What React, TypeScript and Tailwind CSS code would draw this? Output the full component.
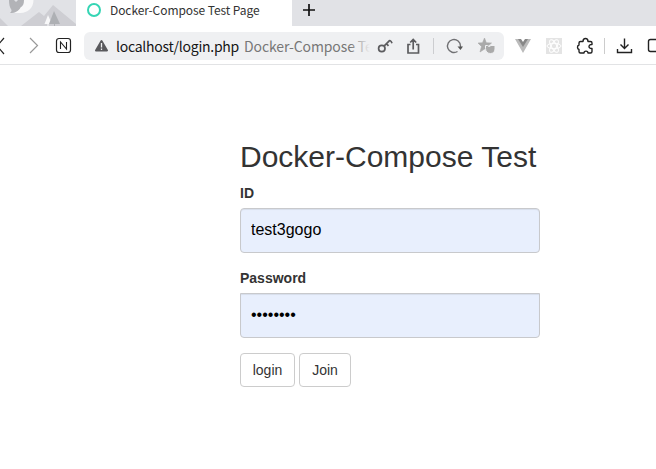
import React from 'react';

const Mountains = () => (
  <svg width="76" height="26" viewBox="0 0 76 26" className="shrink-0">
    <rect width="76" height="26" fill="#e1e2e6" />
    <path d="M0 18 8 26H0Z" fill="#ceced3" />
    <path d="M21 26 39 12l5 4 9-11 23 19v2Z" fill="#ceced3" />
    <path d="M22 0h11.500c0 8-6 13-13 13h-7c5-2 8-6 8.500-13Z" fill="#f8f8f9" />
    <path d="M9 0h5l2 2 2-2h6c0 4-1 6-3.500 7.500C19 11 15 13 10 13c1-1 1.500-1.500 1.500-3C9.500 7 9 4 9 0Z" fill="#b2b3b7" />
    <path d="m48 15 4 9h-7.500Z" fill="#f8f8f9" />
    <path d="m54 11 6 13H49Z" fill="#aeb0b4" />
    <path d="M48 22v4" stroke="#f8f8f9" />
    <path d="M54.500 22v4" stroke="#aeb0b4" />
  </svg>
);

const Toolbar = () => (
  <nav className="flex h-[39px] items-center overflow-hidden border-b border-[#e2e3e5] bg-white pt-px">
    <svg width="76" height="30" viewBox="0 0 76 30" fill="none" className="mr-2 shrink-0">
      <path d="m4 7-7 8 7 8" stroke="#222" strokeWidth="1.2" />
      <path d="m30 7 7.5 7.5L30 22" stroke="#999" strokeWidth="1.2" />
      <rect x="56.5" y="7.5" width="14" height="14" rx="2.5" stroke="#222" strokeWidth="1.2" />
      <path d="M60.5 18v-7l6 7v-7" stroke="#222" strokeWidth="1.1" />
    </svg>
    <div className="flex h-7 w-[420px] shrink-0 items-center rounded-md bg-[#eff0f2]">
      <svg width="32" height="28" viewBox="0 0 32 28" className="shrink-0">
        <path d="M17.5 9 23 18.500H12Z" fill="#59595c" stroke="#59595c" strokeWidth="2" strokeLinejoin="round" />
        <path d="M17.5 11v4.500m0 1v1.500" stroke="#eff0f2" strokeWidth="1.3" />
      </svg>
      <div className="relative flex w-[254px] shrink-0 overflow-hidden whitespace-nowrap text-[14px] leading-[26px]">
        <span className="w-[128px] shrink-0 tracking-[-0.26px] text-[#151515]">localhost/login.php</span>
        <span className="tracking-[-0.1px] text-[#777]">Docker-Compose Te</span>
        <span className="absolute right-0 h-7 w-5 bg-gradient-to-r from-transparent to-[#eff0f2]" />
      </div>
      <svg width="134" height="28" viewBox="370 31 134 28" fill="none" className="shrink-0" stroke="#5c5c5f" strokeWidth="1.7">
        <circle cx="381.800" cy="47.5" r="3.2" />
        <path d="m384 45.200 4.500-4.500c1-1.500 2.500-1.500 3.500 1.500m-5.500.500 2 2.200" />
        <path d="M410.500 43.500h-2.500v8.500h10.500v-8.500H416m-2.800 5v-10m-3 3 3-3 3 3" />
        <path d="M433.5 37v16" stroke="#cccdd0" strokeWidth="1" />
        <path d="M457.500 50.500a6.500 6.500 0 1 1 3-5.500v1.500" stroke="#707073" strokeWidth="1.4" />
        <path d="m457.500 45.500 3 3.500 2.5-3.500Z" fill="#555" stroke="none" />
        <path d="m484.500 37 1.800 4.800 5.200.2-4 3.500 1.500 5-4.500-2.500-4.500 3 1.500-5.500-3.500-3.500 4.500-.2Z" fill="#aaa" stroke="#aaa" strokeWidth=".6" strokeLinejoin="round" />
        <path d="M485.500 44.500h2l1.500 1 2-1h4v3.500c0 3-2 4.500-4.500 4.500s-5-1.500-5-5Z" fill="#aaa" stroke="#eff0f2" strokeWidth="1" />
      </svg>
    </div>
    <svg width="152" height="28" viewBox="504 31 152 28" fill="none" className="shrink-0" stroke="#222" strokeWidth="1.4">
      <path d="M515 38h4l4 7 4-7h4l-8 14Z" fill="#bbb" stroke="none" />
      <path d="M518 38h3l2 3 2-3h3l-5 8Z" fill="#888" stroke="none" />
      <rect x="546" y="37" width="16" height="16" fill="#e4e4e4" stroke="none" />
      <g stroke="#fff" strokeWidth="1">
        <ellipse cx="554" cy="45" rx="7" ry="2.7" />
        <ellipse cx="554" cy="45" rx="7" ry="2.7" transform="rotate(60 554 45)" />
        <ellipse cx="554" cy="45" rx="7" ry="2.7" transform="rotate(120 554 45)" />
      </g>
      <path d="M580.500 40.500h2.500c0-4 5-4 5 0h2.500c1 0 1.500.5 1.500 1.500v1.500c-4-.5-4 4.500 0 4v3c0 1-.5 1.500-1.500 1.500H588c0-2.500-4-2.500-4 0h-3.500c-1 0-1.500-.5-1.500-1.500v-2c-2-.5-2-4 0-4.500v-2c0-1 .5-1.500 1.500-1.500Z" strokeLinejoin="round" />
      <path d="M604.5 37v16" stroke="#ccc" strokeWidth="1" />
      <path d="M624.5 37.5v10m-4-4 4 4 4-4M617.5 48v3.5h14V48" />
      <rect x="648.5" y="38.5" width="12" height="12" rx="2" />
    </svg>
  </nav>
);

export default function App() {
  return (
    <main className="h-[469px] w-[656px] overflow-hidden bg-white font-['Noto_Sans_CJK_KR',sans-serif]">
      <header className="flex h-[26px] bg-[#e1e2e6]">
        <Mountains />
        <div className="flex w-[216px] items-center bg-white pl-[11px]">
          <svg width="14" height="14" viewBox="0 0 14 14" className="mt-[-6px] mr-[9px] shrink-0">
            <circle cx="7" cy="7" r="6" fill="none" stroke="#35d5b4" strokeWidth="2" />
          </svg>
          <span className="mt-[-7px] whitespace-nowrap text-[12px] leading-4 tracking-[-0.08px] text-[#333]">Docker-Compose Test Page</span>
        </div>
        <svg width="34" height="20" viewBox="0 0 34 20"><path d="M11 10h12M17 4v12" stroke="#111" strokeWidth="1.7" /></svg>
      </header>
      <Toolbar />
      <form className="ml-[240px] w-[300px] pt-[75px] font-['Liberation_Sans',Arial,sans-serif] text-[14px] leading-5 text-[#333]" onSubmit={(e) => e.preventDefault()}>
        <h2 className="mb-[10px] whitespace-nowrap text-[30px] font-normal leading-[33px]">Docker-Compose Test</h2>
        <label htmlFor="user" className="mb-[5px] block font-bold">ID</label>
        <input id="user" defaultValue="test3gogo" className="mb-[15px] block h-[45px] w-full rounded border border-[#c8c9cc] bg-[#e8effd] px-[10px] pb-[2px] text-base text-black shadow-[inset_0_1px_1px_rgba(0,0,0,0.075)]" />
        <label htmlFor="password" className="mb-[5px] block font-bold">Password</label>
        <input id="password" type="password" defaultValue="password" className="mb-[15px] block h-[45px] w-full rounded-b border border-[#c8c9cc] bg-[#e8effd] px-[10px] pb-[2px] text-base text-black shadow-[inset_0_1px_1px_rgba(0,0,0,0.075)]" />
        <div className="flex gap-1">
          <button className="h-[34px] w-[55px] rounded border border-[#ccc] bg-white">login</button>
          <button className="h-[34px] w-[52px] rounded border border-[#ccc] bg-white">Join</button>
        </div>
      </form>
    </main>
  );
}
